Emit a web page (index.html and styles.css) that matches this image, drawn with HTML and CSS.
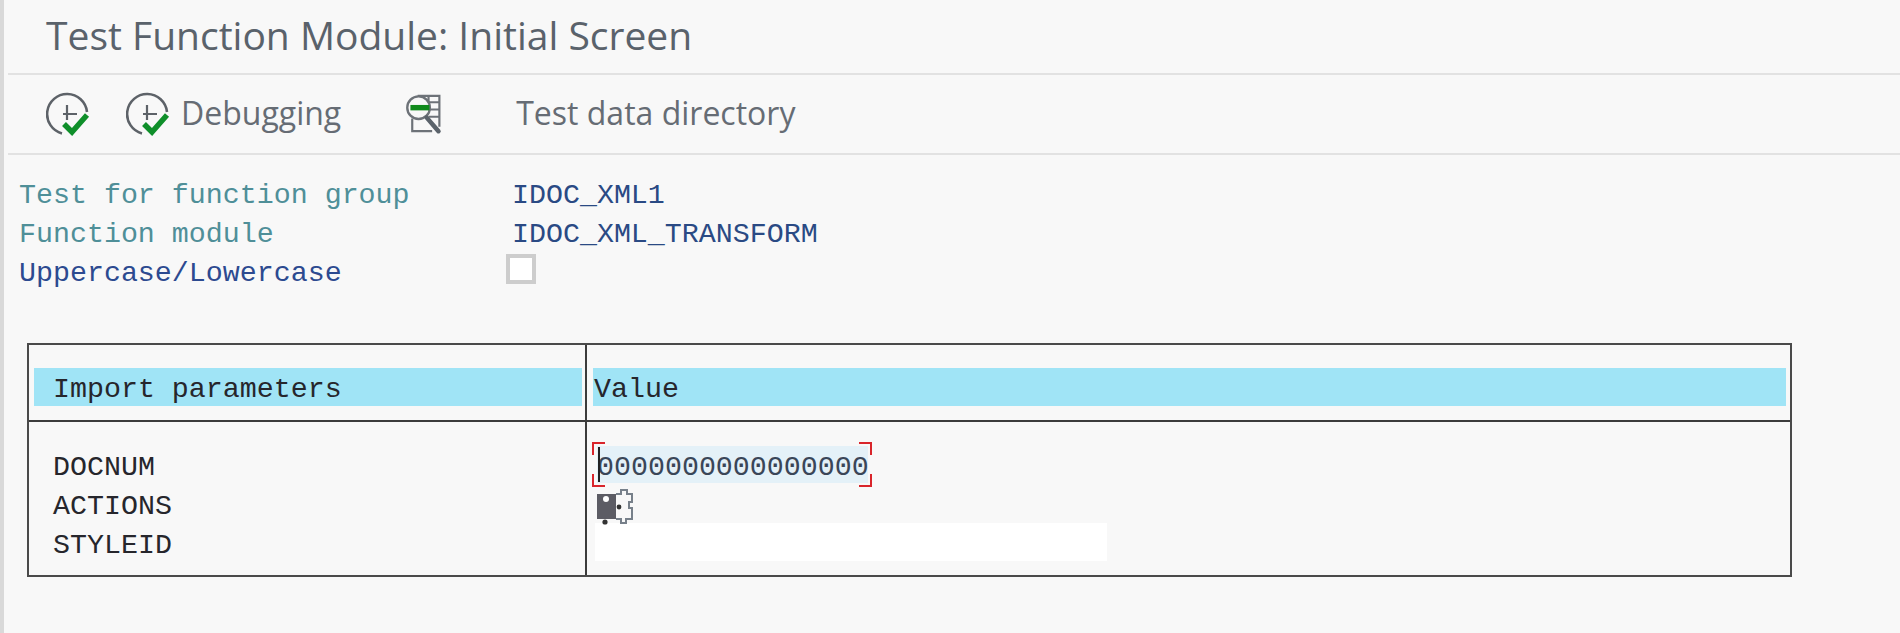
FILE: index.html
```html
<!DOCTYPE html>
<html lang="en">
<head>
  <meta charset="UTF-8" />
  <title>Test Function Module: Initial Screen</title>
  <link rel="stylesheet" href="styles.css">
</head>
<body>
  <header class="title-bar">Test Function Module: Initial Screen</header>

  <nav class="toolbar">
    <button class="tool tool-run" aria-label="Execute">
      <svg width="44" height="44" viewBox="0 0 44 44"><use href="#run-icon"/></svg>
    </button>
    <button class="tool tool-debug">
      <svg width="44" height="44" viewBox="0 0 44 44"><use href="#run-icon"/></svg>
      <span class="tool-text">Debugging</span>
    </button>
    <button class="tool tool-find" aria-label="Find test data">
      <svg width="38" height="44" viewBox="0 0 42 46">
        <path d="M14 3H38V37M26 3V18M26 10H38M26 18H38M26 26H38M8 28V42H30" fill="none" stroke="#6d7278" stroke-width="2.4"/>
        <circle cx="15" cy="16" r="12.5" fill="#f8f8f8" stroke="#6d7278" stroke-width="2.6"/>
        <path d="M6 13H27V19H6Z" fill="#108a1c"/>
        <path d="M24 27L37 42" stroke="#5b636b" stroke-width="5" stroke-linecap="round"/>
      </svg>
    </button>
    <button class="tool tool-dir"><span class="tool-text">Test data directory</span></button>
  </nav>

  <section class="info">
    <span class="label">Test for function group</span><span class="value">IDOC_XML1</span>
    <span class="label">Function module</span><span class="value">IDOC_XML_TRANSFORM</span>
    <span class="label label-input">Uppercase/Lowercase</span><span class="check"></span>
  </section>

  <section class="params">
    <div class="head-cell"><div class="band band-name">Import parameters</div></div>
    <div class="head-cell head-value"><div class="band band-value">Value</div></div>
    <div class="names">
      <div>DOCNUM</div>
      <div>ACTIONS</div>
      <div>STYLEID</div>
    </div>
    <div class="values">
      <div class="field field-focus">
        <i class="corner tl"></i><i class="corner tr"></i><i class="corner bl"></i><i class="corner br"></i>
        <i class="caret"></i>0000000000000000
      </div>
      <div class="field-icon">
        <svg width="38" height="38" viewBox="0 0 38 38">
          <path d="M1 6H20V31H1Z" fill="#5c5c64"/>
          <circle cx="10" cy="11" r="3" fill="#fff"/>
          <path d="M20 6H25V2H31V6H36V14H33V20H36V31H30V35H25V31H20" fill="#f8f8f8" stroke="#77808a" stroke-width="2"/>
          <circle cx="23" cy="19" r="2.4" fill="#333"/>
          <circle cx="9" cy="34" r="2.6" fill="#333"/>
        </svg>
      </div>
      <div class="field-blank"></div>
    </div>
  </section>

  <svg class="defs" width="0" height="0">
    <symbol id="run-icon" viewBox="0 0 44 44">
      <path d="M16 41.4A20 20 0 1 1 41 20" fill="none" stroke="#5d6268" stroke-width="2.6"/>
      <path d="M21 13V28M17 22H31" fill="none" stroke="#5d6268" stroke-width="2.2"/>
      <path d="M18 32L26 40L41 23" fill="none" stroke="#0f8f2a" stroke-width="5.5"/>
    </symbol>
  </svg>
</body>
</html>
```

FILE: styles.css
```css
body {
  margin: 0;
  height: 633px;
  overflow: hidden;
  background: #f8f8f8;
  border-left: 4px solid #d9d9d9;
  box-sizing: border-box;
  font-family: 'Liberation Mono', 'Courier New', monospace;
}

.title-bar {
  height: 75px;
  margin-left: 4px;
  padding-left: 38px;
  box-sizing: border-box;
  border-bottom: 2px solid #e2e2e2;
  font-family: 'Open Sans', sans-serif;
  font-size: 39px;
  line-height: 70px;
  color: #5a626b;
}

.toolbar {
  height: 80px;
  margin-left: 4px;
  box-sizing: border-box;
  border-bottom: 2px solid #e2e2e2;
  display: flex;
  align-items: center;
  padding-left: 38px;
}

.tool {
  display: flex;
  align-items: center;
  background: none;
  border: 0;
  padding: 0;
  font-family: 'Open Sans', sans-serif;
  font-size: 32px;
  color: #666c74;
}

.tool svg {
  display: block;
}

.tool-text {
  padding-bottom: 3px;
}

.tool-debug {
  margin-left: 36px;
  gap: 11px;
}

.tool-find {
  margin-left: 64px;
}

.tool-dir {
  margin-left: 73px;
}

.info {
  display: grid;
  grid-template-columns: 493px 1fr;
  grid-auto-rows: 39px;
  align-items: center;
  padding: 20px 0 0 15px;
  font-size: 28.3px;
}

.label {
  color: #4f8f98;
}

.label-input {
  color: #2c4a90;
}

.value {
  color: #2a4a84;
}

.check {
  width: 22px;
  height: 22px;
  margin: -8px 0 0 -6px;
  background: #fff;
  border: 4px solid #cdcdcd;
}

.params {
  width: 1765px;
  height: 234px;
  margin: 51px 0 0 23px;
  box-sizing: border-box;
  border: 2px solid #4a4a4a;
  display: grid;
  grid-template-columns: 556px 1fr;
  grid-template-rows: 77px 1fr;
  font-size: 28.3px;
  color: #26262c;
}

.head-cell {
  border-bottom: 2px solid #3c3c3c;
  padding: 23px 0 0 5px;
}

.head-value {
  border-left: 2px solid #3c3c3c;
  padding: 23px 4px 0 6px;
}

.band {
  height: 38px;
  line-height: 42px;
  background: #a0e4f6;
}

.band-name {
  padding-left: 19px;
  margin-right: 3px;
}

.band-value {
  padding-left: 1px;
}

.names {
  padding: 26px 0 0 24px;
}

.names div {
  height: 39px;
  line-height: 39px;
}

.values {
  border-left: 2px solid #3c3c3c;
  padding: 20px 0 0 5px;
}

.field {
  position: relative;
  width: 280px;
  height: 45px;
  line-height: 50px;
  padding-left: 5px;
  box-sizing: border-box;
}

.field-focus {
  background: linear-gradient(#e4f1f8, #e4f1f8) no-repeat 5px 4px / 271px 37px;
  color: #3a4658;
}

.caret {
  position: absolute;
  left: 6px;
  top: 5px;
  width: 2px;
  height: 35px;
  background: #222;
}

.corner {
  position: absolute;
  width: 11px;
  height: 11px;
  border: 0 solid #d9252b;
}

.tl { left: 0; top: 0; border-width: 2px 0 0 2px; }
.tr { right: 0; top: 0; border-width: 2px 2px 0 0; }
.bl { left: 0; bottom: 0; border-width: 0 0 2px 2px; }
.br { right: 0; bottom: 0; border-width: 0 2px 2px 0; }

.field-icon {
  height: 36px;
  padding: 1px 0 0 4px;
  box-sizing: border-box;
}

.field-icon svg {
  display: block;
}

.field-blank {
  width: 512px;
  height: 38px;
  margin-left: 3px;
  background: #fff;
}

.defs {
  position: absolute;
}
```
